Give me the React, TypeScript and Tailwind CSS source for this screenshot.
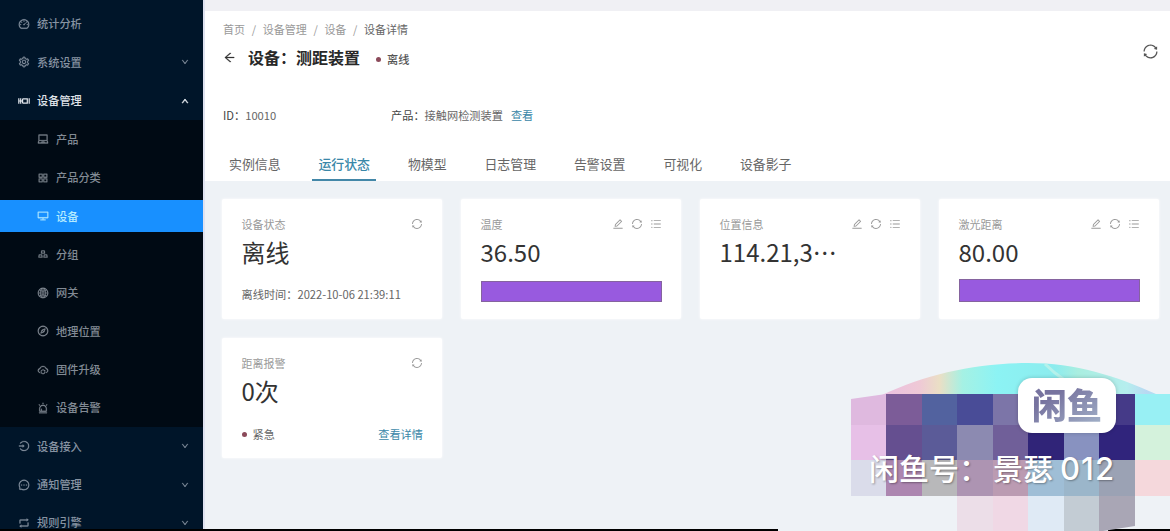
import type { ReactNode } from 'react';
import type { IconType } from 'react-icons';
import {
  AiOutlineAlert,
  AiOutlineAppstore,
  AiOutlineArrowLeft,
  AiOutlineCloudSync,
  AiOutlineCompass,
  AiOutlineDashboard,
  AiOutlineDesktop,
  AiOutlineDown,
  AiOutlineEdit,
  AiOutlineGlobal,
  AiOutlineGold,
  AiOutlineLaptop,
  AiOutlineLogin,
  AiOutlineMessage,
  AiOutlineRetweet,
  AiOutlineSetting,
  AiOutlineSync,
  AiOutlineUnorderedList,
  AiOutlineUp,
} from 'react-icons/ai';

function DeviceIcon({ className }: { className?: string }) {
  return (
    <svg viewBox="0 0 12 12" className={className} fill="none" stroke="currentColor" strokeWidth="1.2">
      <path d="M.8 3.2v5.6M2.7 3.2v5.6M.8 6h1.9M9.3 3.2v5.6M11.2 3.2v5.6M4.6 3.8h4.7M4.6 8.2h4.7M4.6 3.8v4.4" />
      <path d="M2.7 6h1.9" />
    </svg>
  );
}

type Item = { label: string; icon: IconType | typeof DeviceIcon; arrow?: 'up' | 'down' };

const topItems: Item[] = [
  { label: '统计分析', icon: AiOutlineDashboard },
  { label: '系统设置', icon: AiOutlineSetting, arrow: 'down' },
  { label: '设备管理', icon: DeviceIcon, arrow: 'up' },
];

const subItems: Item[] = [
  { label: '产品', icon: AiOutlineLaptop },
  { label: '产品分类', icon: AiOutlineAppstore },
  { label: '设备', icon: AiOutlineDesktop },
  { label: '分组', icon: AiOutlineGold },
  { label: '网关', icon: AiOutlineGlobal },
  { label: '地理位置', icon: AiOutlineCompass },
  { label: '固件升级', icon: AiOutlineCloudSync },
  { label: '设备告警', icon: AiOutlineAlert },
];

const bottomItems: Item[] = [
  { label: '设备接入', icon: AiOutlineLogin, arrow: 'down' },
  { label: '通知管理', icon: AiOutlineMessage, arrow: 'down' },
  { label: '规则引擎', icon: AiOutlineRetweet, arrow: 'down' },
];

function MenuItem({ item }: { item: Item }) {
  const Icon = item.icon;
  const open = item.arrow === 'up';
  return (
    <div className={`flex h-[38.4px] items-center pr-[14px] pl-[17.5px] ${open ? 'text-[#e0e5eb]' : 'text-[#8793a2]'}`}>
      <Icon className="mr-[7.5px] size-3 shrink-0 stroke-[20]" />
      <span className="leading-none font-medium">{item.label}</span>
      {item.arrow === 'down' && <AiOutlineDown className="ml-auto size-2 stroke-[40]" />}
      {open && <AiOutlineUp className="ml-auto size-2 stroke-[90]" />}
    </div>
  );
}

function SubItem({ item }: { item: Item }) {
  const Icon = item.icon;
  const active = item.label === '设备';
  return (
    <div
      className={`flex h-8 items-center pl-[37px] font-medium ${
        active ? 'bg-[#1890ff] text-[#b5ebff]' : 'text-[#828a94]'
      }`}
    >
      <Icon className="mr-[7px] size-3 shrink-0 stroke-[20]" />
      <span>{item.label}</span>
    </div>
  );
}

function Sidebar() {
  return (
    <aside className="h-[529px] w-[203px] shrink-0 overflow-hidden bg-[#001529] pt-[4.8px] text-[11.2px]">
      <MenuItem item={topItems[0]} />
      <MenuItem item={topItems[1]} />
      <div className="[&_svg]:first:stroke-[1.2]">
        <MenuItem item={topItems[2]} />
      </div>
      <div className="flex flex-col gap-[6.4px] bg-[#000a14] py-[3.2px]">
        {subItems.map((item) => (
          <SubItem key={item.label} item={item} />
        ))}
      </div>
      {bottomItems.map((item) => (
        <MenuItem key={item.label} item={item} />
      ))}
    </aside>
  );
}

const tabs = ['实例信息', '运行状态', '物模型', '日志管理', '告警设置', '可视化', '设备影子'];

function Header() {
  return (
    <header className="flex h-[170px] flex-col bg-white pt-[11px] pl-[18px]">
      <nav className="flex h-[14px] items-center gap-[6.7px] text-[11px] text-[#999]">
        <span>首页</span>
        <span>/</span>
        <span>设备管理</span>
        <span>/</span>
        <span>设备</span>
        <span>/</span>
        <span className="text-[#666]">设备详情</span>
      </nav>
      <div className="mt-[9px] flex h-6 items-center">
        <AiOutlineArrowLeft className="size-[13px] stroke-[20] text-[#333]" />
        <h1 className="ml-[12px] text-[16px] font-bold text-[#282828]">设备：测距装置</h1>
        <span className="mt-[5px] ml-4 size-[5px] rounded-full bg-[#8b4a5a]" />
        <span className="mt-[5px] ml-[6px] text-[11.2px] font-medium text-[#555]">离线</span>
        <AiOutlineSync className="mr-[11px] mb-[11px] ml-auto size-[17px] text-[#555]" />
      </div>
      <div className="mt-9 flex h-5 items-center text-[11.2px] text-[#666]">
        <div className="w-[168px]">
          <span className="text-[#444]">ID：</span>10010
        </div>
        <div>
          <span className="text-[#444]">产品：</span>接触网检测装置
          <span className="ml-2 text-[#3a87a8]">查看</span>
        </div>
      </div>
      <div className="mt-auto flex gap-[25.9px] text-[12.9px] text-[#666]">
        {tabs.map((tab) => (
          <div
            key={tab}
            className={`h-[31px] px-1.5 leading-[28px] ${
              tab === '运行状态' ? 'border-b-2 border-[#4387a8] font-medium text-[#3a87a8]' : ''
            }`}
          >
            {tab}
          </div>
        ))}
      </div>
    </header>
  );
}

function Card({ title, value, tools, children }: { title: string; value: string; tools?: boolean; children?: ReactNode }) {
  return (
    <div className="flex h-[120px] flex-col rounded-xs bg-white pt-[17px] pr-[19px] pl-[19.5px] shadow-[0_0_3px_#ffffff]">
      <div className="flex h-4 items-center text-[#999]">
        <span className="text-[11px]">{title}</span>
        <div className="ml-auto flex gap-[7px]">
          {tools && <AiOutlineEdit className="size-3" />}
          <AiOutlineSync className="size-3" />
          {tools && <AiOutlineUnorderedList className="size-3" />}
        </div>
      </div>
      <div className="mt-[3px] h-[34px] text-[24px] leading-[34px] text-[#333]">{value}</div>
      {children}
    </div>
  );
}

function Cards() {
  return (
    <section className="grid grid-cols-[repeat(4,220px)] gap-x-[19px] gap-y-[19px] pt-[18px] pl-[17px]">
      <Card title="设备状态" value="离线">
        <div className="mt-[17px] text-[11.2px] leading-4 text-[#666]">离线时间：2022-10-06 21:39:11</div>
      </Card>
      <Card title="温度" value="36.50" tools>
        <div className="mt-[12px] h-[21px] border border-[#85639f] bg-[#985adf]" />
      </Card>
      <Card title="位置信息" value="114.21,3⋯" tools />
      <Card title="激光距离" value="80.00" tools>
        <div className="mt-[10px] h-[23px] border border-[#85639f] bg-[#985adf]" />
      </Card>
      <Card title="距离报警" value="0次">
        <div className="mt-[18px] flex items-center text-[11.2px] leading-4 text-[#666]">
          <span className="mr-[6px] size-[5px] rounded-full bg-[#8b4a5a]" />
          紧急
          <span className="ml-auto text-[#3a87a8]">查看详情</span>
        </div>
      </Card>
    </section>
  );
}

const columns = [0, 35, 71, 106, 142, 177, 213, 248, 284, 319];
const rows = [31, 62, 97, 133, 168];
const tiles = [
  ['#dfb9df', '#7c5c98', '#52629f', '#494c97', '#7c75a8', '#4a4090', '#453a88', '#453a88', '#98f0f4'],
  ['#e7c0e7', '#654f90', '#5b5b98', '#8c8ab1', '#705f99', '#302478', '#8892c0', '#30247c', '#d4f2dc'],
  ['#dadcea', '#ac86b0', '#b8b8ba', '#ad94b2', '#bb9bb2', '#9fbed6', '#9bb6ca', '#9ba2b4', '#f5d8dc'],
  ['', '', '', '#ecdee8', '#f0d8e5', '#dfeaf5', '#c3ccd4', '#a9a6b5', ''],
];

function Watermark() {
  return (
    <div className="absolute right-0 bottom-0 h-[168px] w-[319px]">
      <svg viewBox="0 0 319 168" className="absolute inset-0 size-full">
        <defs>
          <linearGradient id="dome">
            <stop offset="0" stopColor="#eabfe0" />
            <stop offset=".13" stopColor="#efc9d6" />
            <stop offset=".2" stopColor="#eadfc5" />
            <stop offset=".28" stopColor="#a5f1e4" />
            <stop offset=".4" stopColor="#8cf3f4" />
            <stop offset=".6" stopColor="#8cecee" />
            <stop offset=".68" stopColor="#a9eee0" />
            <stop offset=".85" stopColor="#b5eeee" />
            <stop offset=".92" stopColor="#b9d8f2" />
            <stop offset="1" stopColor="#98f0f4" />
          </linearGradient>
          <clipPath id="edge">
            <path d="M0 36 35 31H319V133H284V163L252 168H0Z" />
          </clipPath>
        </defs>
        <path d="M31 32C75 11 125 0 177 0C225 0 265 13 305 31H319V34H31Z" fill="url(#dome)" />
        <path d="M194 1C206 13 219 22 236 29" stroke="#c5f3ea" strokeWidth="3" fill="none" opacity=".7" />
        <g clipPath="url(#edge)" shapeRendering="crispEdges">
          {tiles.map((row, y) =>
            row.map(
              (fill, x) =>
                fill && (
                  <rect
                    key={`${x}-${y}`}
                    x={columns[x]}
                    y={rows[y]}
                    width={columns[x + 1] - columns[x]}
                    height={rows[y + 1] - rows[y]}
                    fill={fill}
                  />
                ),
            ),
          )}
        </g>
      </svg>
      <div className="absolute top-[15px] left-[167px] flex h-[55px] w-[98px] items-center justify-center rounded-[14px] bg-white shadow-[0_0_4px_#0003]">
        <span className="-mt-1 bg-linear-to-br from-[#77739f] from-30% to-[#a4b4ca] bg-clip-text text-[35px] leading-[44px] font-black text-transparent">
          闲鱼
        </span>
      </div>
      <div className="absolute top-[84px] left-[18px] flex text-[30px] leading-[40px] font-medium whitespace-nowrap text-white [text-shadow:1px_1px_2px_#0005]">
        <span>闲鱼号：</span>
        <span className="ml-1">景瑟</span>
        <span className="mt-0.5 ml-[7px] font-[Inter] text-[31px] tracking-[1px]">012</span>
      </div>
    </div>
  );
}

export default function App() {
  return (
    <div className="relative h-[531px] w-[1170px] overflow-hidden bg-[#eef2f6] font-['Noto_Sans_CJK_SC','Noto_Sans',sans-serif]">
      <div className="flex">
        <Sidebar />
        <main className="flex min-w-0 grow flex-col border-l-2 border-[#dfe2f0]">
          <div className="h-[11px] bg-[#f0f0f4]" />
          <Header />
          <Cards />
        </main>
      </div>
      <div className="flex h-0.5 justify-between">
        <div className="w-[778px] bg-black" />
        <div className="w-[62px] bg-black" />
      </div>
      <Watermark />
    </div>
  );
}
